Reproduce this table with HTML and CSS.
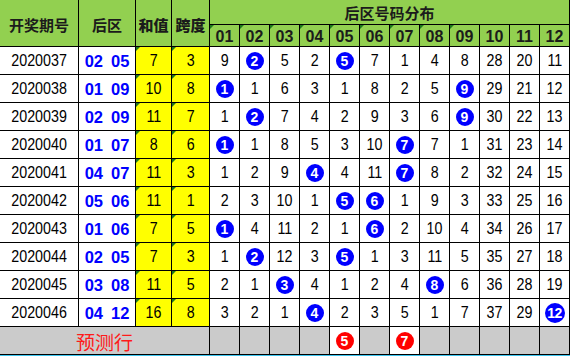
FILE: index.html
```html
<!DOCTYPE html>
<html lang="zh">
<head>
<meta charset="utf-8">
<title>后区号码分布</title>
<link rel="stylesheet" href="styles.css">
</head>
<body>
<div class="sheet">
  <div class="grid">
    <div class="cell head tall">开奖期号</div>
    <div class="cell head tall">后区</div>
    <div class="cell head tall strong">和值</div>
    <div class="cell head tall strong">跨度</div>
    <div class="cell head span12">后区号码分布</div>
    <div class="cell head num tri">01</div>
    <div class="cell head num tri">02</div>
    <div class="cell head num tri">03</div>
    <div class="cell head num tri">04</div>
    <div class="cell head num tri">05</div>
    <div class="cell head num tri">06</div>
    <div class="cell head num tri">07</div>
    <div class="cell head num tri">08</div>
    <div class="cell head num tri">09</div>
    <div class="cell head num">10</div>
    <div class="cell head num">11</div>
    <div class="cell head num">12</div>
  </div>
  <div class="grid body" id="rows"></div>
</div>
<script src="app.js"></script>
</body>
</html>
```

FILE: app.js
```js
const data = [
  ["2020037","02 05",7,3,["9","*2","5","2","*5","7","1","4","8","28","20","11"]],
  ["2020038","01 09",10,8,["*1","1","6","3","1","8","2","5","*9","29","21","12"]],
  ["2020039","02 09",11,7,["1","*2","7","4","2","9","3","6","*9","30","22","13"]],
  ["2020040","01 07",8,6,["*1","1","8","5","3","10","*7","7","1","31","23","14"]],
  ["2020041","04 07",11,3,["1","2","9","*4","4","11","*7","8","2","32","24","15"]],
  ["2020042","05 06",11,1,["2","3","10","1","*5","*6","1","9","3","33","25","16"]],
  ["2020043","01 06",7,5,["*1","4","11","2","1","*6","2","10","4","34","26","17"]],
  ["2020044","02 05",7,3,["1","*2","12","3","*5","1","3","11","5","35","27","18"]],
  ["2020045","03 08",11,5,["2","1","*3","4","1","2","4","*8","6","36","28","19"]],
  ["2020046","04 12",16,8,["3","2","1","*4","2","3","5","1","7","37","29","*12"]]
];
const rows = document.getElementById("rows");
const t = (v) => `<span class="t">${v}</span>`;
let html = "";
for (const [p, b, s, k, vals] of data) {
  const [b1, b2] = b.split(" ");
  html += `<div class="cell plain">${t(p)}</div>`;
  html += `<div class="cell back"><span>${b1}</span><span>${b2}</span></div>`;
  html += `<div class="cell plain yellow tri">${t(s)}</div>`;
  html += `<div class="cell plain yellow tri">${t(k)}</div>`;
  for (const v of vals) {
    if (v.startsWith("*")) {
      const n = v.slice(1);
      html += `<div class="cell plain"><span class="ball${n.length > 1 ? " wide" : ""}">${n}</span></div>`;
    } else {
      html += `<div class="cell plain">${t(v)}</div>`;
    }
  }
}
html += `<div class="cell predict-label">预测行</div>`;
for (let i = 1; i <= 12; i++) {
  if (i === 5 || i === 7) {
    html += `<div class="cell plain"><span class="ball red">${i}</span></div>`;
  } else {
    html += `<div class="cell gray"></div>`;
  }
}
rows.innerHTML = html;
```

FILE: styles.css
```css
html, body {
  margin: 0;
  padding: 0;
  background: #fff;
}

.sheet {
  width: 570px;
  border-bottom: 2px solid #3cc4ee;
}

.grid {
  display: grid;
  grid-template-columns: 79px 57px 36px 38px repeat(12, 30px);
  grid-template-rows: 25px 22px;
}

.grid.body {
  grid-template-rows: repeat(11, 28px);
}

.cell {
  box-sizing: border-box;
  border-right: 1px solid #000;
  border-bottom: 1px solid #000;
  display: flex;
  align-items: center;
  justify-content: center;
  position: relative;
}

.head {
  background: #92d050;
  color: #1b1b1b;
  font-family: "Noto Sans CJK SC", "Liberation Sans", sans-serif;
  font-weight: 700;
  font-size: 15px;
}

.head.tall {
  grid-row: span 2;
  padding-top: 2px;
}

.head.strong {
  font-weight: 900;
}

.head.span12 {
  grid-column: span 12;
}

.head.num {
  font-family: "Liberation Sans", sans-serif;
  font-size: 16px;
  font-weight: 700;
  padding-top: 2px;
}

.tri::before {
  content: "";
  position: absolute;
  left: 0;
  top: 0;
  border-top: 4px solid #1f7a1f;
  border-right: 4px solid transparent;
}

.plain {
  font-family: "Liberation Sans", sans-serif;
  font-size: 17px;
  color: #000;
}

.t {
  display: inline-block;
  transform: scaleX(0.84);
  padding-top: 1px;
}

.yellow {
  background: #ffff00;
}

.back {
  font-family: "Liberation Sans", sans-serif;
  font-weight: 700;
  font-size: 16.5px;
  color: #0000ff;
  gap: 8px;
  padding-top: 1px;
}

.ball {
  width: 18px;
  height: 18px;
  border-radius: 50%;
  background: #0000ff;
  color: #fff;
  display: flex;
  align-items: center;
  justify-content: center;
  font-family: "Liberation Sans", sans-serif;
  font-weight: 700;
  font-size: 14px;
}

.ball.wide {
  width: 20px;
  height: 20px;
  font-size: 14px;
  letter-spacing: -0.5px;
}

.ball.red {
  background: #ff0000;
}

.predict-label {
  grid-column: span 4;
  background: #cbcbcb;
  color: #ff1a1a;
  font-family: "Noto Sans CJK SC", sans-serif;
  font-size: 19px;
  padding-top: 1px;
}

.gray {
  background: #cbcbcb;
}
```
